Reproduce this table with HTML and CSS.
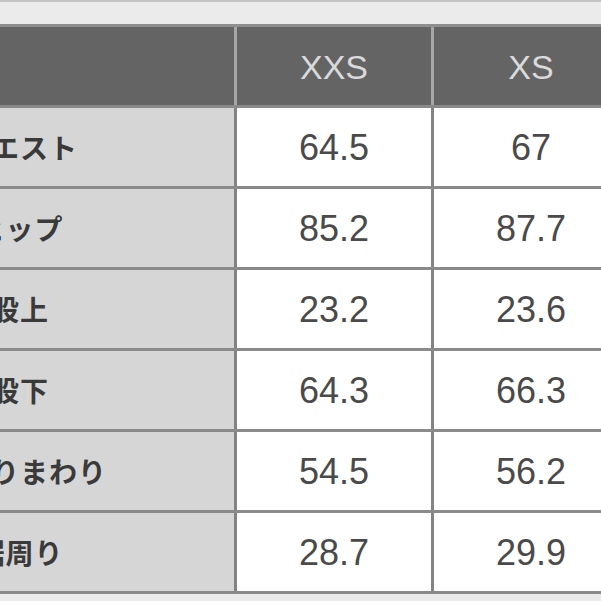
FILE: index.html
```html
<!DOCTYPE html>
<html lang="ja">
<head>
<meta charset="utf-8">
<title>サイズ表</title>
<link rel="stylesheet" href="styles.css">
</head>
<body>
<div class="page">
  <div class="table">
    <div class="row head">
      <div class="cell label-head"></div>
      <div class="cell size">XXS</div>
      <div class="cell size">XS</div>
    </div>
    <div class="row">
      <div class="cell label">ウエスト</div>
      <div class="cell value">64.5</div>
      <div class="cell value">67</div>
    </div>
    <div class="row">
      <div class="cell label">ヒップ</div>
      <div class="cell value">85.2</div>
      <div class="cell value">87.7</div>
    </div>
    <div class="row">
      <div class="cell label">股上</div>
      <div class="cell value">23.2</div>
      <div class="cell value">23.6</div>
    </div>
    <div class="row">
      <div class="cell label">股下</div>
      <div class="cell value">64.3</div>
      <div class="cell value">66.3</div>
    </div>
    <div class="row">
      <div class="cell label">わたりまわり</div>
      <div class="cell value">54.5</div>
      <div class="cell value">56.2</div>
    </div>
    <div class="row">
      <div class="cell label">裾周り</div>
      <div class="cell value">28.7</div>
      <div class="cell value">29.9</div>
    </div>
  </div>
</div>
</body>
</html>
```

FILE: styles.css
```css
html, body {
  margin: 0;
  padding: 0;
  width: 601px;
  height: 601px;
  overflow: hidden;
  background: #ececec;
}

.page {
  width: 601px;
  height: 601px;
  overflow: hidden;
  padding-top: 24px;
  box-sizing: border-box;
  border-top: 2px solid #c4c4c4;
  background: #ebebeb;
}

.table {
  display: flex;
  flex-direction: column;
  gap: 3px;
  width: 822px;
  margin-top: -2px;
  margin-left: -194px;
  background: #8a8a8a;
  border-top: 3px solid #8e8e8e;
  border-bottom: 3px solid #8a8a8a;
}

.row {
  display: grid;
  grid-template-columns: 428px 194px 194px;
  column-gap: 3px;
  height: 78px;
  background: #838383;
}

.row.head {
  background: #a6a6a6;
}

.cell {
  display: flex;
  align-items: center;
  justify-content: center;
}

.label-head,
.size {
  background: #646464;
}

.size {
  color: #dadada;
  font-family: "Liberation Sans", Arial, sans-serif;
  font-size: 34px;
  padding-top: 2px;
}

.label {
  background: #d6d6d6;
  color: #3a3a3a;
  font-family: "Noto Sans CJK JP", "Noto Sans", sans-serif;
  font-weight: 700;
  font-size: 28px;
  letter-spacing: 1px;
}

.value {
  background: #ffffff;
  color: #4a4a4a;
  font-family: "Liberation Sans", Arial, sans-serif;
  font-size: 36px;
  padding-top: 2px;
}
```
